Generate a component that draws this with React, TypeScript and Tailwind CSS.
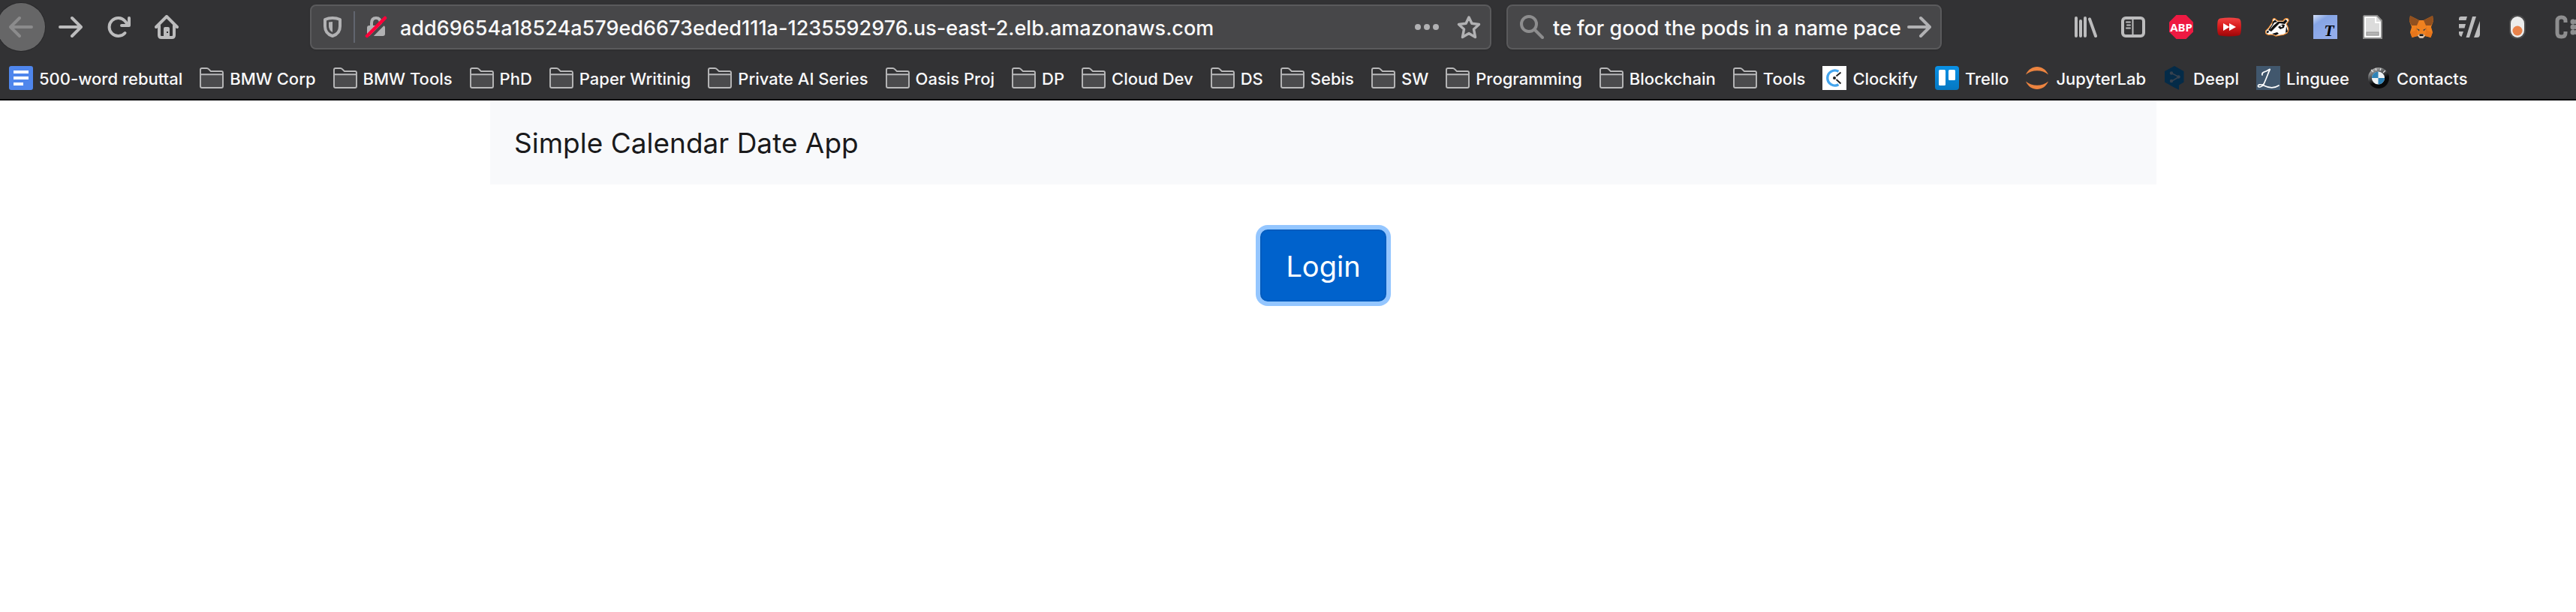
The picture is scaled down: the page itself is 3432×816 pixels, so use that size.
import type { ReactNode } from "react";

function Icon({ children, className = "size-8" }: { children: ReactNode; className?: string }) {
  return (
    <svg viewBox="0 0 32 32" fill="none" aria-hidden="true" className={`${className} shrink-0`}>
      {children}
    </svg>
  );
}

const arrow = (
  <path d="M2 16H29M18 4L30 16L18 28" stroke="currentColor" strokeWidth="4" strokeLinecap="round" strokeLinejoin="round" />
);

const folder = (
  <Icon>
    <path d="M1 5.5Q1 3 3.500 3H9.500Q11 3 12 4.200L15 7H28.500Q31 7 31 9.500V27Q31 29 29 29H3Q1 29 1 27Z" fill="#323234" />
    <path d="M1 11H31V27Q31 29 29 29H3Q1 29 1 27Z" fill="#4b4b4d" />
    <path d="M1 5Q1 3 3 3H9.500Q11 3 12 4.200L14.800 7H29Q31 7 31 9V27Q31 29 29 29H3Q1 29 1 27ZM1 11.200H31" stroke="#b9b9ba" strokeWidth="1.900" />
  </Icon>
);

const docs = (
  <Icon>
    <rect width="32" height="32" rx="3" fill="#4f86ec" />
    <path d="M6 8H26M6 16H26M6 24H19" stroke="#fff" strokeWidth="4" />
  </Icon>
);

const clockify = (
  <Icon>
    <rect width="32" height="32" fill="#fff" />
    <path d="M21.500 7.200A10 10 0 1 0 21.500 24.800" stroke="#44a5ee" strokeWidth="3.400" />
    <path d="M18.500 13.500L24.500 8.500M18.500 18L24.500 23.500" stroke="#222" strokeWidth="2" />
    <circle cx="16" cy="16" r="2" fill="#222" />
  </Icon>
);

const trello = (
  <Icon>
    <defs>
      <linearGradient id="trello" x2="0" y2="1">
        <stop stopColor="#0a91e6" />
        <stop offset="1" stopColor="#0578c2" />
      </linearGradient>
    </defs>
    <rect width="32" height="32" rx="4" fill="url(#trello)" />
    <rect x="5" y="5" width="9" height="21" rx="1.500" fill="#fff" />
    <rect x="18" y="5" width="9" height="14" rx="1.500" fill="#fff" />
  </Icon>
);

const jupyter = (
  <Icon>
    <path d="M0 11.500C3 4.500 9 1 15 1S27 4.500 30 11.500C22 4.500 8 4.500 0 11.500Z" fill="#ec8440" />
    <path d="M0 20.500C3 27.500 9 31 15 31S27 27.500 30 20.500C22 27.500 8 27.500 0 20.500Z" fill="#ec8440" />
  </Icon>
);

const deepl = (
  <Icon>
    <path d="M15 0L27.500 7V21.500L21 25.500V31.800L14.500 28.500L2 21.500V7Z" fill="#042b48" />
    <path d="M11 9.500L21 14.500L11 20.500" stroke="#37424f" strokeWidth="1.500" />
    <circle cx="11" cy="9.500" r="2.200" fill="#37424f" />
    <circle cx="20.500" cy="14.500" r="2.200" fill="#37424f" />
    <circle cx="11" cy="20" r="2.200" fill="#37424f" />
  </Icon>
);

const linguee = (
  <Icon>
    <rect width="32" height="32" fill="#41576d" />
    <path
      d="M8 12C7 9 10 8 13 7C16 5.500 19 3 18 5C16 9 13 18 10 24C8 28 3 29 2.500 27C2 24.500 6 24 10 26C16 29 24 30 30 26"
      stroke="#fff"
      strokeWidth="1.700"
      strokeLinecap="round"
    />
  </Icon>
);

const bmw = (
  <Icon>
    <defs>
      <linearGradient id="bmw" x1="0.300" y1="0" x2="0.600" y2="0.600">
        <stop stopColor="#b5b5b5" />
        <stop offset="0.500" stopColor="#56585a" />
        <stop offset="1" stopColor="#08090a" />
      </linearGradient>
    </defs>
    <circle cx="16" cy="16" r="14" fill="url(#bmw)" />
    <circle cx="15.500" cy="16" r="8.600" fill="#eef2f4" />
    <path d="M15.500 16V7.400A8.600 8.600 0 0 0 6.900 16ZM15.500 16V24.600A8.600 8.600 0 0 0 24.100 16Z" fill="#2f83b7" />
    <path d="M6 5L9 8M12 3L13 6M19 3L18 6M25 6L22 9" stroke="#e2e2e2" strokeWidth="1.200" />
  </Icon>
);

const bookmarks: { label: string; icon: ReactNode }[] = [
  { label: "500-word rebuttal", icon: docs },
  { label: "BMW Corp", icon: folder },
  { label: "BMW Tools", icon: folder },
  { label: "PhD", icon: folder },
  { label: "Paper Writinig", icon: folder },
  { label: "Private AI Series", icon: folder },
  { label: "Oasis Proj", icon: folder },
  { label: "DP", icon: folder },
  { label: "Cloud Dev", icon: folder },
  { label: "DS", icon: folder },
  { label: "Sebis", icon: folder },
  { label: "SW", icon: folder },
  { label: "Programming", icon: folder },
  { label: "Blockchain", icon: folder },
  { label: "Tools", icon: folder },
  { label: "Clockify", icon: clockify },
  { label: "Trello", icon: trello },
  { label: "JupyterLab", icon: jupyter },
  { label: "Deepl", icon: deepl },
  { label: "Linguee", icon: linguee },
  { label: "Contacts", icon: bmw },
];

const extensions: { label: string; icon: ReactNode }[] = [
  {
    label: "Library",
    icon: (
      <Icon>
        <path d="M4 4V28M10 8V28M16 4V28M22 5.500L30 28" stroke="currentColor" strokeWidth="4" strokeLinecap="round" />
      </Icon>
    ),
  },
  {
    label: "Sidebars",
    icon: (
      <Icon>
        <rect x="2" y="4" width="28" height="24" rx="4" stroke="currentColor" strokeWidth="4" />
        <path d="M15.500 5V27" stroke="currentColor" strokeWidth="2" />
        <path d="M7 9.500H12M8 13.500H12M7 17.500H12" stroke="currentColor" strokeWidth="2" strokeLinecap="round" />
      </Icon>
    ),
  },
  {
    label: "Adblock Plus",
    icon: (
      <Icon>
        <path d="M9.500 0H22.500L32 9.500V22.500L22.500 32H9.500L0 22.500V9.500Z" fill="#ee1a42" />
        <text x="16" y="22" textAnchor="middle" fontSize="15" fontWeight="700" fill="#fff" className="font-['Noto_Sans',sans-serif]">
          ABP
        </text>
      </Icon>
    ),
  },
  {
    label: "Video speed",
    icon: (
      <Icon>
        <defs>
          <linearGradient id="video" x2="0" y2="1">
            <stop stopColor="#f04444" />
            <stop offset="0.450" stopColor="#da1d1d" />
            <stop offset="1" stopColor="#9c0508" />
          </linearGradient>
        </defs>
        <path d="M4 4.500Q16 2.500 28 4.500Q31 5 31.500 9Q32.300 16 31.500 23Q31 27 28 27.500Q16 29.500 4 27.500Q1 27 .5 23Q-.3 16 .5 9Q1 5 4 4.500Z" fill="url(#video)" />
        <path d="M8 11L16.500 16L8 21ZM16 11L25 16L16 21Z" fill="#fff" />
      </Icon>
    ),
  },
  {
    label: "Privacy Badger",
    icon: (
      <Icon>
        <path d="M10 9C9 5 12 3 14 6L17 8L24 8C26 3 32 4 31 8L28 12C31 17 32 20 29 24C26 26 24 27 20 27L14 28C11 26 9 26 7 26C3 27 0 25 0 22C1 20 5 18 6 15Z" fill="#fff" stroke="#f18b2c" strokeWidth="1.200" />
        <path d="M10 9L13 6.500L16 9L24 9L27 6L29.500 8L26 12L19 11L13 17L8 22L4 20L9 13Z" fill="#111" />
        <path d="M12 10L17 9L11 14L6 20Z" fill="#fff" />
        <path d="M17 16L23 12.500L26 13L25 17L20 19Z" fill="#111" />
        <circle cx="21.500" cy="15" r="1.300" fill="#fff" />
        <path d="M1.500 22L4 20.500L5 23L2 24.500ZM9 25L16 23L18 25L14 27ZM28 15L30 22L27 24Z" fill="#111" />
      </Icon>
    ),
  },
  {
    label: "Text tool",
    icon: (
      <Icon>
        <defs>
          <linearGradient id="sky" x2="0.600" y2="0.900">
            <stop stopColor="#d5e0f7" />
            <stop offset="0.350" stopColor="#86a5e5" />
            <stop offset="1" stopColor="#93adeb" />
          </linearGradient>
        </defs>
        <rect width="32" height="32" fill="url(#sky)" />
        <text x="21" y="28" textAnchor="middle" fontSize="22" fontWeight="700" fontStyle="italic" fill="#000" className="font-['Liberation_Serif',serif]">
          T
        </text>
      </Icon>
    ),
  },
  {
    label: "Page notes",
    icon: (
      <Icon>
        <path d="M4 1H21L27 7.500V31H3V2Z" fill="#dcdcdc" stroke="#8c8c8c" strokeWidth="2" />
        <path d="M5 3H19V10H25V29H5Z" stroke="#fff" strokeWidth="2" />
        <rect x="7" y="23" width="16" height="4" fill="#b5b5b5" stroke="#969696" />
      </Icon>
    ),
  },
  {
    label: "MetaMask",
    icon: (
      <Icon>
        <path d="M1 1L13 7H19L31 1L32 8L29 16L31 23L28.500 30L21 28L18 31H14L11 28L3.500 30L1 23L3 16L0 8Z" fill="#f0811f" />
        <path d="M1 1L13 7L10 14L3 14L0 8ZM31 1L19 7L22 14L29 14L32 8Z" fill="#91501f" />
        <path d="M10 14L8 21L1 23L3.500 30L11 28L10 21ZM22 14L24 21L31 23L28.500 30L21 28L22 21Z" fill="#e7761b" />
        <path d="M9.500 18L13.500 19.500L13 21.500ZM22.500 18L18.500 19.500L19 21.500Z" fill="#30404b" />
        <path d="M11 27.500L14 25H18L21 27.500L18 31H14Z" fill="#d3c2b2" />
        <path d="M13.500 25.500H18.500V28H13.500Z" fill="#1a1512" />
      </Icon>
    ),
  },
  {
    label: "Forms",
    icon: (
      <Icon>
        <path d="M5 2H13L11.500 7H2V5Q2 2 5 2ZM2 12H11L9.500 17.500H2ZM2 22H8L5.500 29Q2 28 2 24ZM20 2H25L16 30H11.500ZM30 8V26Q30 30 26 30H22Z" fill="currentColor" />
      </Icon>
    ),
  },
  {
    label: "Toggle",
    icon: (
      <Icon>
        <rect x="6" y="1" width="20" height="30" rx="10" fill="#ececec" stroke="#4a4a4b" strokeWidth="2" />
        <circle cx="16" cy="21" r="6.500" fill="#e9824a" />
      </Icon>
    ),
  },
];

function NavButton({ label, children }: { label: string; children: ReactNode }) {
  return (
    <button type="button" aria-label={label} className="flex shrink-0 items-center justify-center">
      {children}
    </button>
  );
}

function Toolbar() {
  return (
    <div className="flex h-18 items-center">
      <div className="flex shrink-0 items-center gap-8 pr-[175px] text-[#bcbcbd]">
        <button
          type="button"
          aria-label="Back"
          className="-ml-1 -mr-[14px] flex size-16 shrink-0 items-center justify-center rounded-full bg-[#666667] text-[#8b8b8c] ring-1 ring-[#29292b]"
        >
          <Icon className="size-8 rotate-180">{arrow}</Icon>
        </button>
        <NavButton label="Forward">
          <Icon>{arrow}</Icon>
        </NavButton>
        <NavButton label="Reload">
          <Icon>
            <path d="M24.500 24A12 12 0 1 1 24.500 8L28 12.500M30 4V14H20" stroke="currentColor" strokeWidth="4" strokeLinecap="round" strokeLinejoin="round" />
          </Icon>
        </NavButton>
        <NavButton label="Home">
          <Icon>
            <path d="M2 16L16 2L30 16M6 14V27Q6 30 9 30H23Q26 30 26 27V14" stroke="currentColor" strokeWidth="4" strokeLinecap="round" strokeLinejoin="round" />
            <path d="M12 30V18Q12 16 14 16H18Q20 16 20 18V30Z" fill="currentColor" />
            <rect x="16" y="22" width="2" height="2" fill="#323234" />
          </Icon>
        </NavButton>
      </div>

      <div className="flex h-15 min-w-0 flex-1 items-center rounded-lg border-2 border-[#5a5a5c] bg-[#474749] pr-3 pl-3 text-[#b1b1b3] shadow-sm">
        <NavButton label="Tracking protection">
          <Icon>
            <path d="M16 4Q10.500 4 6 6V15Q6 25 16 28Q26 25 26 15V6Q21.500 4 16 4Z" stroke="currentColor" strokeWidth="4" strokeLinejoin="round" />
            <path d="M16 9V23Q11 20 11 15V9.500Q13 9 16 9Z" fill="currentColor" />
          </Icon>
        </NavButton>
        <span className="mr-3 ml-3 h-[42px] w-[2px] shrink-0 bg-[#61656f]" />
        <NavButton label="Connection not secure">
          <Icon>
            <path d="M10 15V11Q10 4 16 4T22 11V15" stroke="currentColor" strokeWidth="4" />
            <rect x="4" y="14" width="24" height="14" rx="3" fill="currentColor" />
            <path d="M6 32L32 6" stroke="#474749" strokeWidth="4" />
            <path d="M4 28L28 4" stroke="#ff0039" strokeWidth="4.500" strokeLinecap="round" />
          </Icon>
        </NavButton>
        <input
          aria-label="Address"
          defaultValue="add69654a18524a579ed6673eded111a-1235592976.us-east-2.elb.amazonaws.com"
          className="ml-4 h-11 min-w-0 flex-1 bg-transparent pt-[2px] text-[27px] font-medium text-[#f9f9fa] outline-none"
        />
        <div className="flex items-center gap-6">
          <NavButton label="Page actions">
            <Icon>
              <g fill="currentColor">
                <circle cx="4" cy="16" r="4" />
                <circle cx="16" cy="16" r="4" />
                <circle cx="28" cy="16" r="4" />
              </g>
            </Icon>
          </NavButton>
          <NavButton label="Bookmark this page">
            <Icon>
              <path d="M16 3L19.900 11.300L29.500 12.500L22.500 19L24.500 29.500L16 24.500L7.500 29.500L9.500 19L2.500 12.500L12.100 11.300Z" stroke="currentColor" strokeWidth="3.500" strokeLinejoin="round" />
            </Icon>
          </NavButton>
        </div>
      </div>

      <div className="ml-5 flex h-15 w-[580px] shrink-0 items-center rounded-lg border-2 border-[#5a5a5c] bg-[#474749] pr-3 pl-4 text-[#b1b1b3] shadow-sm">
        <Icon className="size-8 text-[#8d8d8e]">
          <circle cx="12" cy="12" r="10" stroke="currentColor" strokeWidth="4" />
          <path d="M19.500 19.500L30 30" stroke="currentColor" strokeWidth="4" strokeLinecap="round" />
        </Icon>
        <input
          aria-label="Search"
          defaultValue="te for good the pods in a name pace"
          className="ml-3 h-11 min-w-0 flex-1 bg-transparent pt-[2px] text-[27px] font-medium text-[#f9f9fa] outline-none"
        />
        <NavButton label="Search">
          <Icon>{arrow}</Icon>
        </NavButton>
      </div>

      <div className="flex shrink-0 items-center gap-8 pl-[175px] text-[#bcbcbd]">
        {extensions.map((item) => (
          <NavButton key={item.label} label={item.label}>
            {item.icon}
          </NavButton>
        ))}
        <NavButton label="Containers">
          <svg viewBox="0 0 30 32" fill="none" aria-hidden="true" className="h-8 w-[30px] text-[#8e8e8f]">
            <path d="M16 10V8Q16 3 10.500 3T5 8V24Q5 29 10.500 29T16 24V22" stroke="currentColor" strokeWidth="5" />
            <g fill="currentColor">
              <circle cx="26" cy="9" r="3.500" />
              <circle cx="26" cy="16" r="3.500" />
              <circle cx="26" cy="23" r="3.500" />
              <path d="M29 6H30V12H29ZM29 13H30V19H29ZM29 20H30V26H29Z" />
            </g>
          </svg>
        </NavButton>
      </div>
    </div>
  );
}

export default function App() {
  return (
    <div className="min-h-screen bg-white font-['Inter','Liberation_Sans',sans-serif]">
      <header className="overflow-hidden border-b-2 border-[#0c0c0d] bg-[#323234]">
        <Toolbar />
        <nav aria-label="Bookmarks" className="flex h-15 items-center gap-[23px] pt-1 pl-3">
          {bookmarks.map((item) => (
            <a key={item.label} href="#" className="flex shrink-0 items-center gap-2 text-[22px] font-medium whitespace-nowrap text-[#f9f9fa]">
              {item.icon}
              <span className="pt-[2px]">{item.label}</span>
            </a>
          ))}
        </nav>
      </header>
      <main className="pl-[94px]">
        <div className="mx-auto max-w-[2220px]">
          <div className="flex h-28 items-center bg-[#f8f9fb] px-8 pt-[2px]">
            <a href="#" className="text-[37px] leading-[60px] text-[#1a1a1b]">
              Simple Calendar Date App
            </a>
          </div>
          <div className="flex justify-center pt-15">
            <button type="button" className="h-24 rounded-[10px] border-2 border-[#005cbf] bg-[#0062cc] px-8 pt-[2px] text-[38px] text-white ring-6 ring-[#94c6ff]">
              Login
            </button>
          </div>
        </div>
      </main>
    </div>
  );
}
